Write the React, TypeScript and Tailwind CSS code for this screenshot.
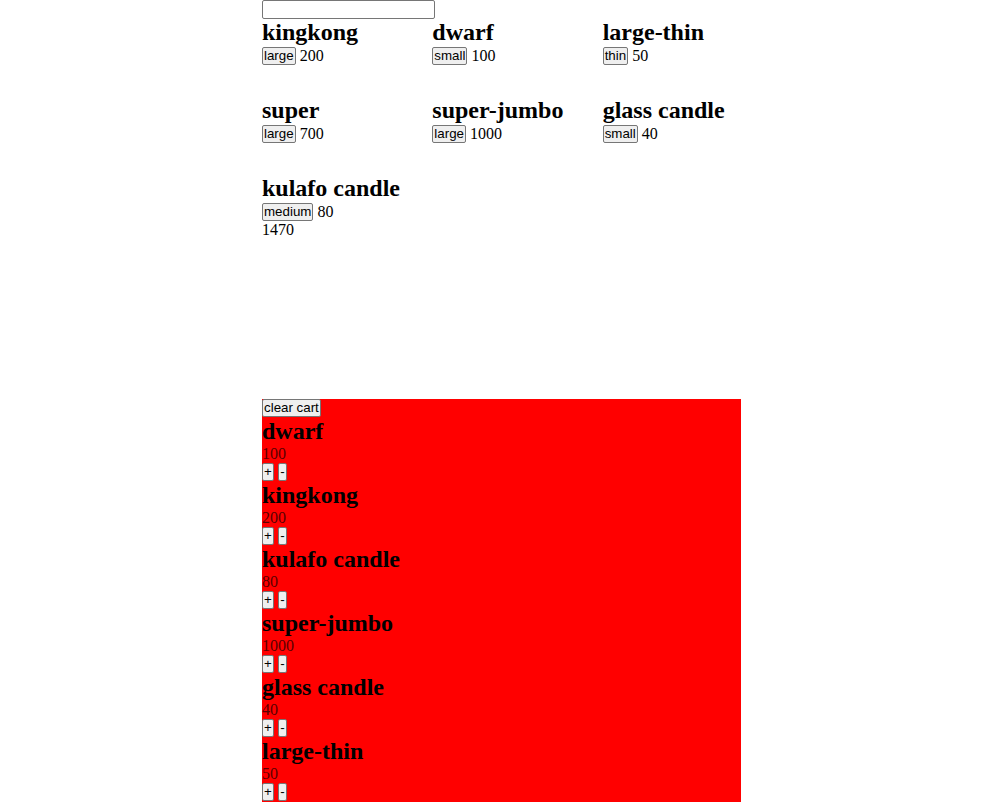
import React from "react";

const products = [
  { name: "kingkong", size: "large", price: 200 },
  { name: "dwarf", size: "small", price: 100 },
  { name: "large-thin", size: "thin", price: 50 },
  { name: "super", size: "large", price: 700 },
  { name: "super-jumbo", size: "large", price: 1000 },
  { name: "glass candle", size: "small", price: 40 },
  { name: "kulafo candle", size: "medium", price: 80 },
];

const cart = [
  { name: "dwarf", price: 100 },
  { name: "kingkong", price: 200 },
  { name: "kulafo candle", price: 80 },
  { name: "super-jumbo", price: 1000 },
  { name: "glass candle", price: 40 },
  { name: "large-thin", price: 50 },
];

const btn =
  "inline-block h-[18px] rounded-[2px] border border-[#767676] bg-[#efefef] px-[1px] align-bottom font-['Liberation_Sans',Arial,sans-serif] text-[13.33px] leading-[14px] text-black";

const App = () => {
  return (
    <div className="min-h-[802px] bg-white font-['Liberation_Serif','Times_New_Roman',serif] text-[16px] text-black">
      <div className="ml-[262px] w-[479px]">
        {/* search */}
        <input
          type="text"
          className="block h-[19px] w-[173px] rounded-[2px] border border-[#767676] bg-white"
        />

        {/* products */}
        <div className="grid grid-cols-3 gap-8">
          {products.map((p) => (
            <div key={p.name}>
              <h2 className="text-[24px] font-bold leading-[27px]">{p.name}</h2>
              <div className="h-[19px] leading-[19px]">
                <button className={btn}>{p.size}</button> {p.price}
              </div>
            </div>
          ))}
        </div>
        <div className="leading-[18px]">1470</div>

        {/* cart */}
        <div className="mt-[160px] bg-[#ff0000] pb-[4px]">
          <div className="flex h-[18px]">
            <button className={btn}>clear cart</button>
          </div>
          {cart.map((c) => (
            <div key={c.name}>
              <h2 className="text-[24px] font-bold leading-[28px]">{c.name}</h2>
              <div className="leading-[18px] text-[#5a0000]">{c.price}</div>
              <div className="flex h-[18px] gap-[4px]">
                <button className={btn + " w-[12px]"}>+</button>
                <button className={btn + " w-[9px]"}>-</button>
              </div>
            </div>
          ))}
        </div>
      </div>
    </div>
  );
};

export default App;
